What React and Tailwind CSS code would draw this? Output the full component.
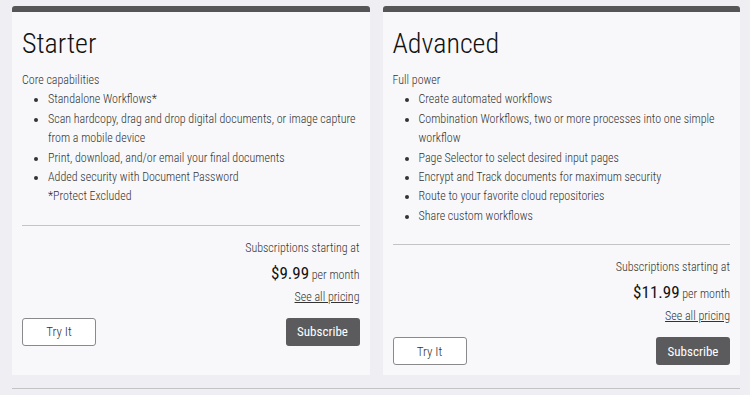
const plans = [
  {
    name: 'Starter',
    tagline: 'Core capabilities',
    features: [
      'Standalone Workflows*',
      'Scan hardcopy, drag and drop digital documents, or image capture from a mobile device',
      'Print, download, and/or email your final documents',
      'Added security with Document Password',
    ],
    note: '*Protect Excluded',
    price: '$9.99',
  },
  {
    name: 'Advanced',
    tagline: 'Full power',
    features: [
      'Create automated workflows',
      'Combination Workflows, two or more processes into one simple workflow',
      'Page Selector to select desired input pages',
      'Encrypt and Track documents for maximum security',
      'Route to your favorite cloud repositories',
      'Share custom workflows',
    ],
    price: '$11.99',
  },
];

function PlanCard({ plan }) {
  return (
    <div className="flex flex-col rounded-t-[3px] overflow-hidden">
      <div className="h-[6px] bg-[#555557]" />
      <div className="flex-1 bg-[#f8f8fa] px-[10px] pt-[14px] pb-[10px]">
        <h2 className="text-[28px] leading-[36px] font-light text-[#111]">{plan.name}</h2>
        <p className="mt-[9px] text-[12px] leading-[19.4px] font-light text-[#333]">{plan.tagline}</p>
        <ul className="pl-[26px] list-disc text-[12px] leading-[19.4px] font-light text-[#333]">
          {plan.features.map((f) => (
            <li key={f}>{f}</li>
          ))}
        </ul>
        {plan.note && (
          <p className="pl-[26px] text-[12px] leading-[19.4px] font-light text-[#333]">{plan.note}</p>
        )}
        <div className="mt-[18px] border-t border-[#c4c4c6] pt-[12px] flex flex-col items-end font-light text-[#333]">
          <p className="text-[12px] leading-[20px]">Subscriptions starting at</p>
          <p className="mt-[4px] leading-[22px]">
            <span className="text-[17px] font-normal text-[#111]">{plan.price}</span>
            <span className="text-[12px]"> per month</span>
          </p>
          <a href="#" className="mt-[1px] text-[12px] leading-[20px] underline">See all pricing</a>
        </div>
        <div className="mt-[11px] flex justify-between">
          <button className="w-[74px] h-[28px] rounded-[3px] border border-[#8a8a8c] bg-white text-[13px] font-light text-[#333]">Try It</button>
          <button className="w-[74px] h-[28px] rounded-[3px] bg-[#5b5b5d] text-[13px] text-white">Subscribe</button>
        </div>
      </div>
    </div>
  );
}

export default function App() {
  return (
    <div
      className="min-h-[395px] bg-[#efeff3] pl-[12px] pr-[10px] pt-[6px]"
      style={{ fontFamily: '"Roboto Condensed", Roboto, sans-serif', fontStretch: 'condensed' }}
    >
      <div className="grid grid-cols-2 gap-[13px]">
        {plans.map((p) => (
          <PlanCard key={p.name} plan={p} />
        ))}
      </div>
      <div className="mt-[13px] border-t border-[#c4c4c6]" />
    </div>
  );
}
